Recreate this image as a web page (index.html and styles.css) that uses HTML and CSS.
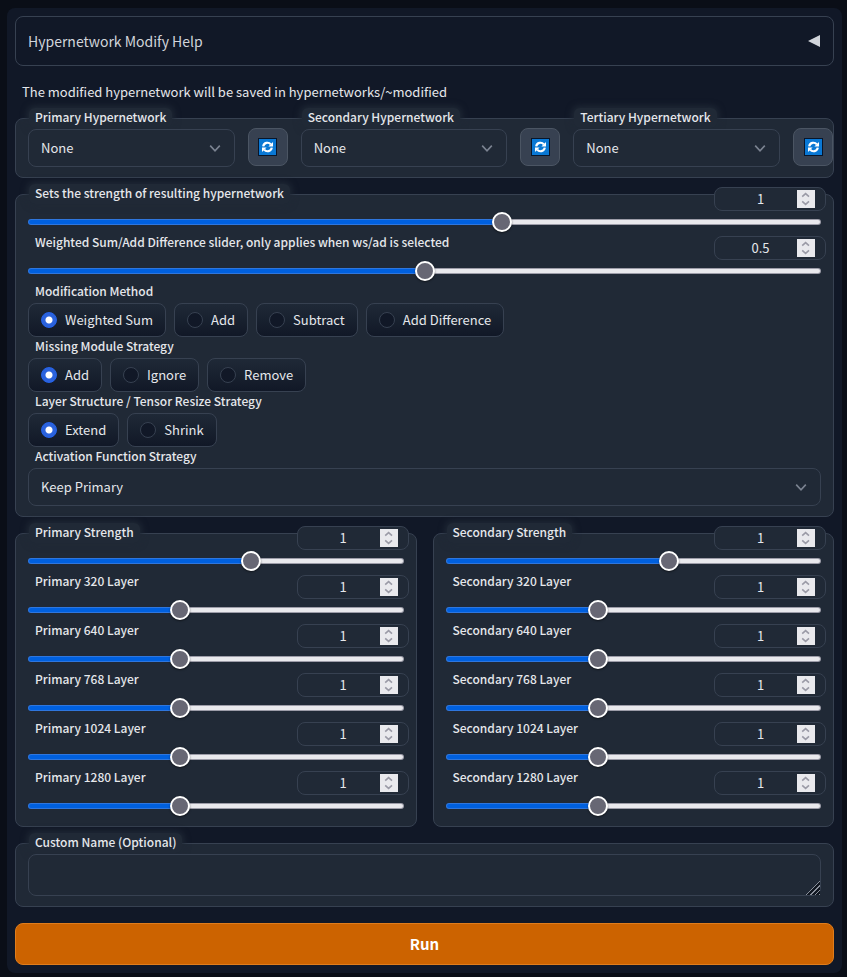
FILE: index.html
```html
<!DOCTYPE html>
<html lang="en">
<head>
<meta charset="utf-8">
<meta name="viewport" content="width=device-width, initial-scale=1">
<title>Hypernetwork Modify</title>
<link rel="stylesheet" href="styles.css">
</head>
<body>
<svg class="defs" aria-hidden="true">
  <symbol id="chevron" viewBox="0 0 12 12"><path d="M1.200 3.600 6 8.800l4.800-5.200" fill="none" stroke="#7b8391" stroke-width="1.600"/></symbol>
  <symbol id="spin" viewBox="0 0 18 18"><path d="M5.200 6.600 8.600 3.600 12 6.600M5.200 11.400l3.400 3 3.400-3" fill="none" stroke="#9a9aa6" stroke-width="1.600"/></symbol>
  <symbol id="refresh" viewBox="0 0 19 18">
    <rect width="19" height="18" fill="#08162b"/>
    <rect x="1" y="1" width="17" height="16" fill="#0a78d4"/>
    <path d="M5.200 8.400A4.300 4.300 0 0 1 12.800 6.400M13.800 9.600A4.300 4.300 0 0 1 6.200 11.600" fill="none" stroke="#fff" stroke-width="2.200"/>
    <path d="M15 4v4.600h-4.600zM4 14V9.400h4.600z" fill="#fff"/>
  </symbol>
</svg>
<main class="page">
  <button type="button" class="accordion">
    <span>Hypernetwork Modify Help</span>
    <svg class="arrow" viewBox="0 0 12 12" aria-hidden="true"><path d="M0 6 12 0v12z" fill="currentColor"/></svg>
  </button>
  <p class="note">The modified hypernetwork will be saved in hypernetworks/~modified</p>

  <section class="panel networks">
    <div class="field">
      <label class="lead" for="net1">Primary Hypernetwork</label>
      <div class="select"><select id="net1"><option>None</option></select><svg><use href="#chevron"/></svg></div>
    </div>
    <button type="button" class="refresh" aria-label="Refresh primary"><svg><use href="#refresh"/></svg></button>
    <div class="field">
      <label class="lead" for="net2">Secondary Hypernetwork</label>
      <div class="select"><select id="net2"><option>None</option></select><svg><use href="#chevron"/></svg></div>
    </div>
    <button type="button" class="refresh" aria-label="Refresh secondary"><svg><use href="#refresh"/></svg></button>
    <div class="field">
      <label class="lead" for="net3">Tertiary Hypernetwork</label>
      <div class="select"><select id="net3"><option>None</option></select><svg><use href="#chevron"/></svg></div>
    </div>
    <button type="button" class="refresh" aria-label="Refresh tertiary"><svg><use href="#refresh"/></svg></button>
  </section>

  <section class="panel">
    <div class="slider">
      <div class="head"><label class="lead" for="s1">Sets the strength of resulting hypernetwork</label><span class="number"><input type="number" aria-label="Strength value" value="1"><svg><use href="#spin"/></svg></span></div>
      <input id="s1" type="range" min="-0.5" max="2" step="0.05" value="1" style="--fill:0.6">
    </div>
    <div class="slider">
      <div class="head"><label for="s2">Weighted Sum/Add Difference slider, only applies when ws/ad is selected</label><span class="number"><input type="number" aria-label="Weighted value" value="0.5" step="0.05"><svg><use href="#spin"/></svg></span></div>
      <input id="s2" type="range" min="0" max="1" step="0.05" value="0.5" style="--fill:0.5">
    </div>
    <fieldset>
      <legend>Modification Method</legend>
      <div class="choices">
        <label><input type="radio" name="method" checked>Weighted Sum</label>
        <label><input type="radio" name="method">Add</label>
        <label><input type="radio" name="method">Subtract</label>
        <label><input type="radio" name="method">Add Difference</label>
      </div>
    </fieldset>
    <fieldset>
      <legend>Missing Module Strategy</legend>
      <div class="choices">
        <label><input type="radio" name="missing" checked>Add</label>
        <label><input type="radio" name="missing">Ignore</label>
        <label><input type="radio" name="missing">Remove</label>
      </div>
    </fieldset>
    <fieldset>
      <legend>Layer Structure / Tensor Resize Strategy</legend>
      <div class="choices">
        <label><input type="radio" name="resize" checked>Extend</label>
        <label><input type="radio" name="resize">Shrink</label>
      </div>
    </fieldset>
    <div class="field">
      <label for="activation">Activation Function Strategy</label>
      <div class="select"><select id="activation"><option>Keep Primary</option></select><svg><use href="#chevron"/></svg></div>
    </div>
  </section>

  <div class="columns">
    <section class="panel">
      <div class="slider">
        <div class="head"><label class="lead" for="p0">Primary Strength</label><span class="number"><input type="number" aria-label="Primary Strength value" value="1"><svg><use href="#spin"/></svg></span></div>
        <input id="p0" type="range" min="-0.5" max="2" step="0.05" value="1" style="--fill:0.6">
      </div>
      <div class="slider">
        <div class="head"><label for="p1">Primary 320 Layer</label><span class="number"><input type="number" aria-label="Primary 320 value" value="1"><svg><use href="#spin"/></svg></span></div>
        <input id="p1" type="range" min="0" max="2.5" step="0.05" value="1" style="--fill:0.4">
      </div>
      <div class="slider">
        <div class="head"><label for="p2">Primary 640 Layer</label><span class="number"><input type="number" aria-label="Primary 640 value" value="1"><svg><use href="#spin"/></svg></span></div>
        <input id="p2" type="range" min="0" max="2.5" step="0.05" value="1" style="--fill:0.4">
      </div>
      <div class="slider">
        <div class="head"><label for="p3">Primary 768 Layer</label><span class="number"><input type="number" aria-label="Primary 768 value" value="1"><svg><use href="#spin"/></svg></span></div>
        <input id="p3" type="range" min="0" max="2.5" step="0.05" value="1" style="--fill:0.4">
      </div>
      <div class="slider">
        <div class="head"><label for="p4">Primary 1024 Layer</label><span class="number"><input type="number" aria-label="Primary 1024 value" value="1"><svg><use href="#spin"/></svg></span></div>
        <input id="p4" type="range" min="0" max="2.5" step="0.05" value="1" style="--fill:0.4">
      </div>
      <div class="slider">
        <div class="head"><label for="p5">Primary 1280 Layer</label><span class="number"><input type="number" aria-label="Primary 1280 value" value="1"><svg><use href="#spin"/></svg></span></div>
        <input id="p5" type="range" min="0" max="2.5" step="0.05" value="1" style="--fill:0.4">
      </div>
    </section>
    <section class="panel">
      <div class="slider">
        <div class="head"><label class="lead" for="q0">Secondary Strength</label><span class="number"><input type="number" aria-label="Secondary Strength value" value="1"><svg><use href="#spin"/></svg></span></div>
        <input id="q0" type="range" min="-0.5" max="2" step="0.05" value="1" style="--fill:0.6">
      </div>
      <div class="slider">
        <div class="head"><label for="q1">Secondary 320 Layer</label><span class="number"><input type="number" aria-label="Secondary 320 value" value="1"><svg><use href="#spin"/></svg></span></div>
        <input id="q1" type="range" min="0" max="2.5" step="0.05" value="1" style="--fill:0.4">
      </div>
      <div class="slider">
        <div class="head"><label for="q2">Secondary 640 Layer</label><span class="number"><input type="number" aria-label="Secondary 640 value" value="1"><svg><use href="#spin"/></svg></span></div>
        <input id="q2" type="range" min="0" max="2.5" step="0.05" value="1" style="--fill:0.4">
      </div>
      <div class="slider">
        <div class="head"><label for="q3">Secondary 768 Layer</label><span class="number"><input type="number" aria-label="Secondary 768 value" value="1"><svg><use href="#spin"/></svg></span></div>
        <input id="q3" type="range" min="0" max="2.5" step="0.05" value="1" style="--fill:0.4">
      </div>
      <div class="slider">
        <div class="head"><label for="q4">Secondary 1024 Layer</label><span class="number"><input type="number" aria-label="Secondary 1024 value" value="1"><svg><use href="#spin"/></svg></span></div>
        <input id="q4" type="range" min="0" max="2.5" step="0.05" value="1" style="--fill:0.4">
      </div>
      <div class="slider">
        <div class="head"><label for="q5">Secondary 1280 Layer</label><span class="number"><input type="number" aria-label="Secondary 1280 value" value="1"><svg><use href="#spin"/></svg></span></div>
        <input id="q5" type="range" min="0" max="2.5" step="0.05" value="1" style="--fill:0.4">
      </div>
    </section>
  </div>

  <section class="panel">
    <div class="field">
      <label class="lead" for="name">Custom Name (Optional)</label>
      <textarea id="name" rows="1"></textarea>
    </div>
  </section>

  <button type="button" class="run">Run</button>
</main>
</body>
</html>
```
FILE: styles.css
```css
* { box-sizing: border-box; }

:root {
  --line: #374151;
  --panel: #202936;
  --page: #111827;
  --text: #e5e7eb;
}

body {
  margin: 0;
  padding: 8px 5px 4px 7px;
  background: #0a0e17;
  color: var(--text);
  font: 13px/20px "Noto Sans CJK SC", sans-serif;
}

input, select, textarea, button { font: inherit; color: inherit; }

.defs { position: absolute; width: 0; height: 0; }

.page {
  display: flex;
  flex-direction: column;
  gap: 16px;
  padding: 8px;
  border-radius: 8px;
  background: var(--page);
}

.accordion {
  display: flex;
  align-items: center;
  justify-content: space-between;
  height: 50px;
  padding: 0 13px 0 12px;
  border: 1px solid var(--line);
  border-radius: 8px;
  background: none;
  color: #d1d5db;
  font-size: 14px;
}

.arrow { width: 12px; height: 12px; }

.note { margin: 0; padding: 0 7px; }

.panel {
  min-width: 0;
  padding: 0 12px 10px;
  border: 1px solid var(--line);
  border-radius: 8px;
  background: var(--panel);
}

.panel > :first-child { margin-top: -11px; }

.panel.networks {
  display: grid;
  grid-template-columns: repeat(3, minmax(0, 1fr) 40px);
  column-gap: 13px;
  padding-right: 0;
}

.networks > .field { margin-top: -11px; }

.field { display: flex; flex-direction: column; align-items: stretch; }

.field > label, .head > label, legend {
  display: block;
  align-self: flex-start;
  height: 20px;
  padding: 0 6px;
  margin: 0 0 1px 1px;
  font-size: 12px;
  font-weight: 500;
  line-height: 18px;
  white-space: nowrap;
}

.lead {
  background: var(--panel);
  border-radius: 6px;
  box-shadow: 0 0 6px 2px var(--panel);
}

.select { display: grid; align-items: center; }

.select > * { grid-area: 1 / 1; }

.select select {
  appearance: none;
  width: 100%;
  height: 38px;
  padding: 0 32px 0 12px;
  border: 1px solid var(--line);
  border-radius: 8px;
  background: var(--panel);
}

.select svg {
  justify-self: end;
  width: 12px;
  height: 12px;
  margin-right: 14px;
  pointer-events: none;
}

.refresh {
  display: grid;
  place-items: center;
  height: 38px;
  margin: 9px 0 0;
  padding: 0;
  border: 1px solid #4b5563;
  border-radius: 8px;
  background: #374151;
}

.refresh svg { width: 19px; height: 18px; }

.slider { margin-bottom: 1px; }

.slider:last-child { margin-bottom: 0; }

.head {
  display: flex;
  justify-content: space-between;
  height: 28px;
}

.number {
  display: flex;
  align-items: center;
  width: 112px;
  height: 24px;
  margin: 3px -5px 0 0;
  padding: 0 10px 0 9px;
  border: 1px solid var(--line);
  border-radius: 8px;
  background: var(--panel);
}

.number input {
  appearance: textfield;
  flex: 1;
  min-width: 0;
  height: 22px;
  padding: 0 0 2px;
  border: 0;
  background: none;
  text-align: center;
}

.number input::-webkit-inner-spin-button { display: none; }

.number svg { width: 18px; height: 18px; background: #e9e9ed; }

input[type="range"] {
  appearance: none;
  display: block;
  width: 100%;
  height: 20px;
  margin: 0;
  background: none;
}

input[type="range"]::-webkit-slider-runnable-track {
  --stop: calc(10px + (100% - 20px) * var(--fill));
  height: 6px;
  border: 1px solid transparent;
  border-radius: 3px;
  background:
    linear-gradient(90deg, #0060df var(--stop), #e9e9ed var(--stop)) padding-box,
    linear-gradient(90deg, #2f76dd var(--stop), #9c9ca8 var(--stop)) border-box;
}

input[type="range"]::-webkit-slider-thumb {
  appearance: none;
  width: 20px;
  height: 20px;
  margin-top: -8px;
  border: 2px solid #fff;
  border-radius: 50%;
  background: #676774;
  box-shadow: 0 1px 2px rgba(0, 0, 0, 0.5);
}

fieldset { min-width: 0; margin: 0; padding: 0; border: 0; }

.choices { display: flex; flex-wrap: wrap; gap: 8px; }

.choices label {
  display: flex;
  align-items: center;
  gap: 8px;
  height: 34px;
  padding: 0 12px;
  border: 1px solid var(--line);
  border-radius: 8px;
  background: linear-gradient(#1f2937, #111827);
}

.choices input {
  appearance: none;
  width: 16px;
  height: 16px;
  margin: 0;
  border: 1px solid var(--line);
  border-radius: 50%;
  background: #111827;
}

.choices input:checked {
  border-color: #2563eb;
  background: radial-gradient(circle, #fff 3px, #2b62dc 4px);
}

.columns {
  display: grid;
  grid-template-columns: repeat(2, minmax(0, 1fr));
  gap: 16px;
}

textarea {
  display: block;
  width: 100%;
  height: 42px;
  padding: 10px;
  border: 1px solid var(--line);
  border-radius: 8px;
  background: var(--panel);
  resize: vertical;
}

textarea::-webkit-resizer {
  background:
    linear-gradient(135deg, var(--panel) 11px, transparent 11px),
    repeating-linear-gradient(135deg, #101620 0 2px, #8a909b 2px 3px);
}

.run {
  height: 42px;
  border: 1px solid #e07d1c;
  border-radius: 8px;
  background: #cc6300;
  color: #fff;
  font-size: 15px;
  font-weight: 700;
}
```
